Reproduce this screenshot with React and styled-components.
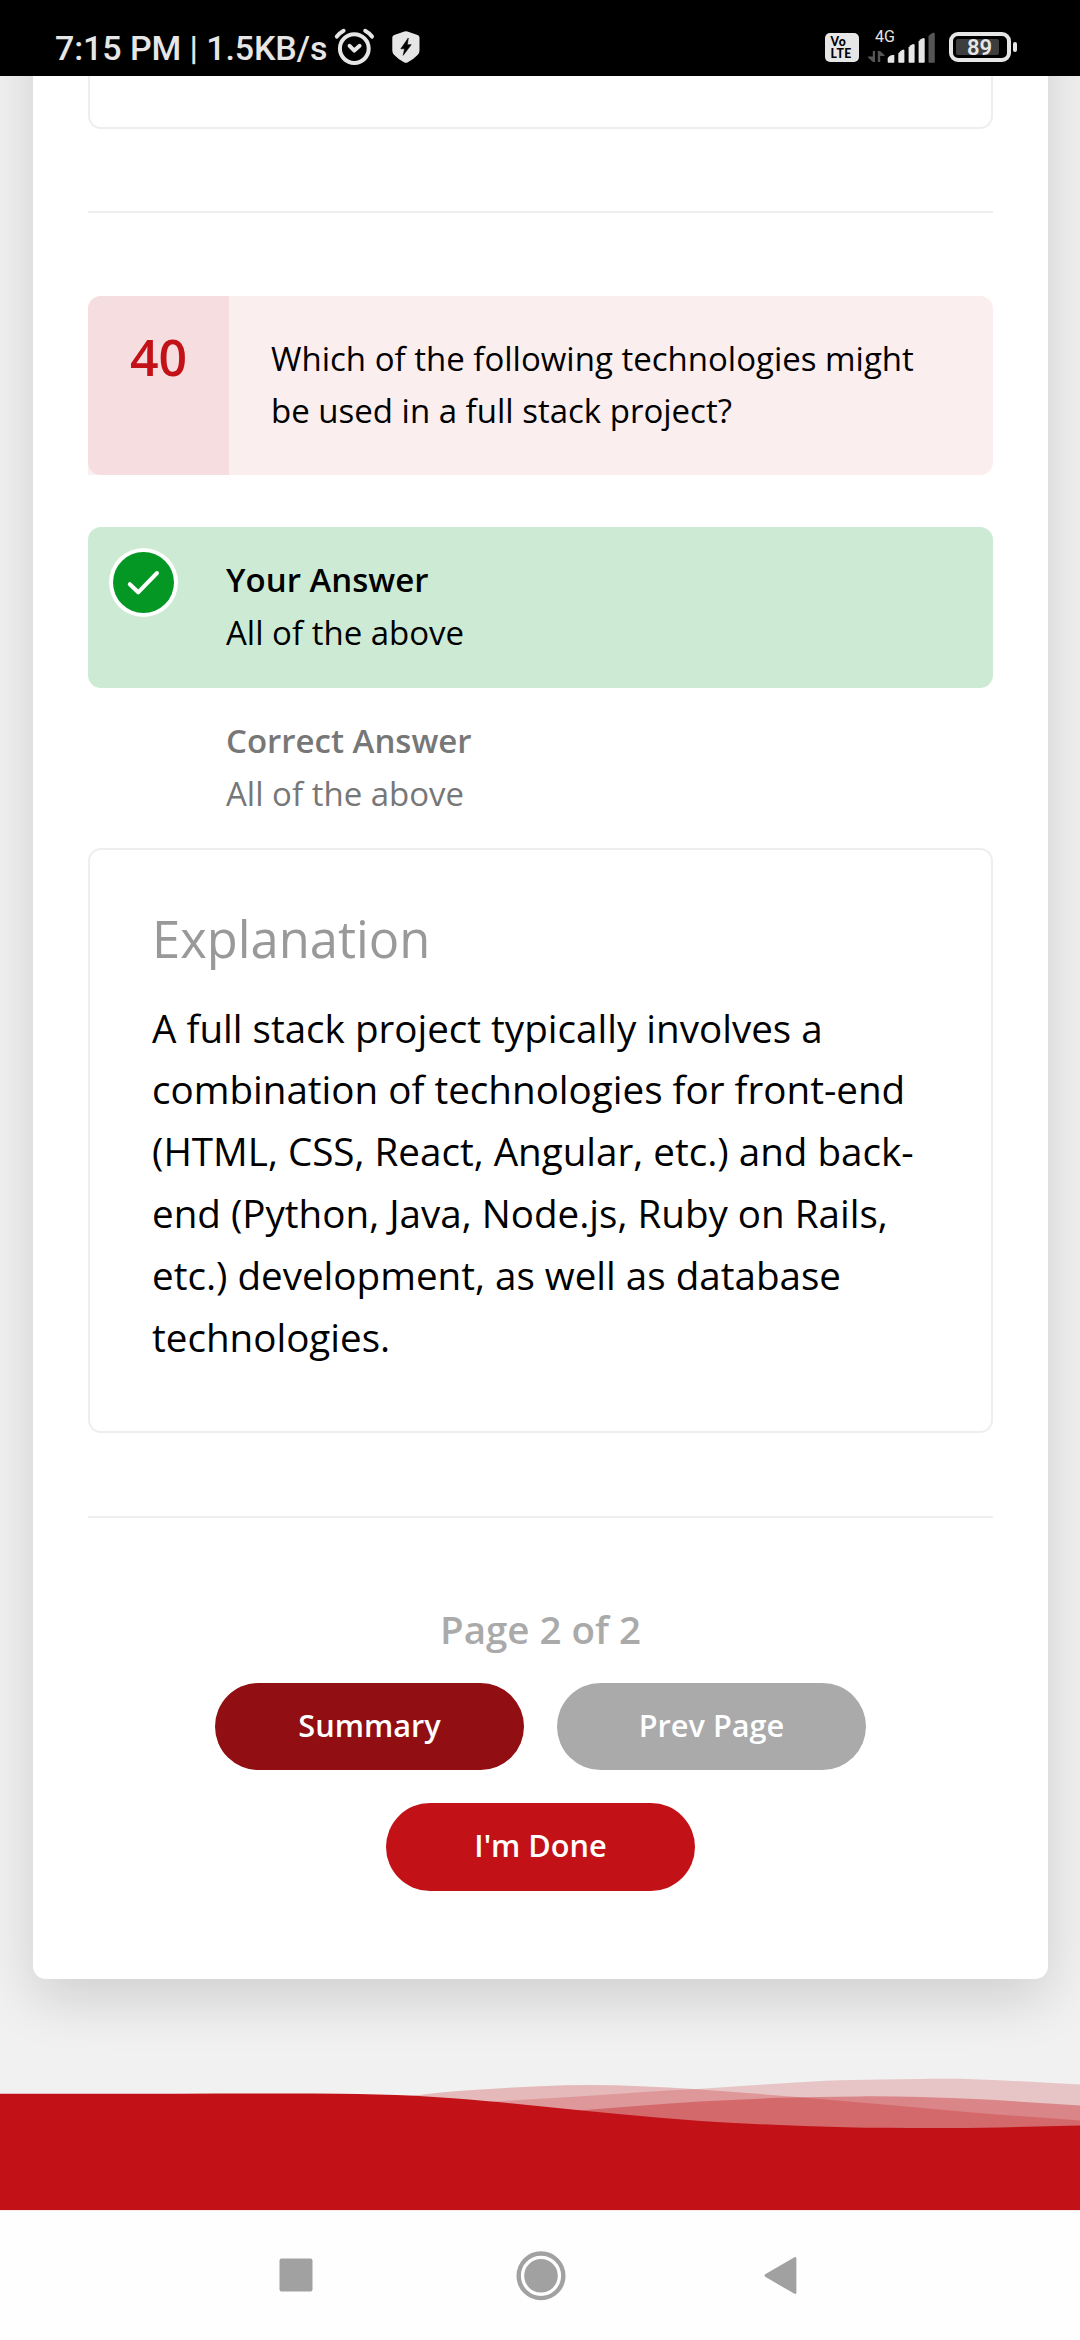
import React from 'react';
import styled, { createGlobalStyle } from 'styled-components';

const GlobalStyle = createGlobalStyle`
  *, *::before, *::after { box-sizing: border-box; }
  html, body { margin: 0; padding: 0; background: #fff; }
  h2, p { margin: 0; font-weight: 400; }
`;

const Screen = styled.div`
  width: 1080px;
  height: 2340px;
  display: flex;
  flex-direction: column;
  overflow: hidden;
  font-family: 'Open Sans', 'Noto Sans', sans-serif;
  color: #000;
`;

/* ---------- status bar ---------- */

const StatusBar = styled.header`
  flex: none;
  height: 76px;
  padding: 26px 69px 0 55px;
  background: #000;
  color: #e6e6e6;
  display: flex;
  justify-content: space-between;
  align-items: flex-start;
  font-family: Roboto, sans-serif;
`;

const StatusGroup = styled.div`
  display: flex;
  align-items: flex-start;
`;

const Clock = styled.span`
  width: 278px;
  font-size: 34px;
  line-height: 44px;
  font-weight: 500;
  letter-spacing: -0.1px;
  white-space: pre;
`;

const StatusIcon = styled.svg`
  display: block;
  flex: none;
  margin-left: ${(p) => p.$gap || 0}px;
`;

const VolteBadge = styled.div`
  width: 34px;
  height: 29.5px;
  margin-top: 6.5px;
  padding: 3px 0 0 5.5px;
  border-radius: 5px;
  background: #e6e6e6;
  color: #000;
  font: 900 12.2px/12.2px Lato, sans-serif;
  letter-spacing: 0.6px;
`;

const Signal = styled.div`
  position: relative;
  width: 68px;
  height: 40px;
  margin-left: 8px;
`;

const NetworkLabel = styled.span`
  position: absolute;
  left: 8px;
  top: 2px;
  font-size: 16px;
  line-height: 18px;
`;

const Battery = styled.div`
  position: relative;
  width: 62px;
  height: 30px;
  margin: 6px 0 0 14px;
  padding: 3px;
  border: 4px solid #e6e6e6;
  border-radius: 9px;
  display: flex;
`;

const BatteryFill = styled.div`
  width: 43px;
  height: 16px;
  border-radius: 2px;
  background: #3d3d3d;
`;

const BatteryTip = styled.span`
  position: absolute;
  left: 60px;
  top: 6px;
  width: 4px;
  height: 10px;
  border-radius: 2px;
  background: #e6e6e6;
`;

const BatteryLevel = styled.span`
  position: absolute;
  left: 14px;
  top: 0;
  font-size: 22px;
  line-height: 24px;
  font-weight: 600;
`;

/* ---------- page ---------- */

const Page = styled.main`
  flex: none;
  height: 2134px;
  overflow: hidden;
  background: #f1f1f1;
  display: flex;
  flex-direction: column;
`;

const Card = styled.section`
  flex: none;
  margin: -120px 32px 0 33px;
  padding: 20px 55px 88.2px;
  border-radius: 13px;
  background: #fff;
  box-shadow: 0 20px 55px rgba(0, 0, 0, 0.14);
`;

const Outlined = styled.div`
  border: 2px solid #eee;
  border-radius: 13px;
`;

const PreviousExplanation = styled(Outlined)`
  height: 153px;
`;

const Divider = styled.div`
  height: 2px;
  margin: ${(p) => p.$top}px 0 ${(p) => p.$bottom}px;
  background: #eee;
`;

const Question = styled.div`
  display: flex;
  height: 179px;
  margin-bottom: 52px;
  border-radius: 13px 13px 13px 0;
  background: #faeeee;
`;

const QuestionNumber = styled.div`
  flex: none;
  width: 141px;
  padding-top: 36px;
  border-radius: 13px 0 0 13px;
  background: #f6dee0;
  color: #c31217;
  font-size: 50px;
  line-height: 50px;
  font-weight: 600;
  text-align: center;
`;

const QuestionText = styled.p`
  padding: 36.5px 60px 0 42px;
  font-size: 33px;
  line-height: 52.4px;
`;

const Answer = styled.div`
  display: flex;
  height: ${(p) => (p.$chosen ? 161 : 160)}px;
  border-radius: 13px;
  background: ${(p) => (p.$chosen ? '#cdebd4' : 'transparent')};
  color: ${(p) => (p.$chosen ? '#000' : '#777')};
  font-size: 33px;
  line-height: 52.8px;
`;

const AnswerMark = styled.div`
  flex: none;
  width: 138px;
  padding: 20.5px 0 0 21px;
`;

const AnswerBody = styled.div`
  padding-top: 26.8px;
`;

const AnswerLabel = styled.p`
  font-weight: 600;
`;

const Explanation = styled(Outlined)`
  height: 585px;
  padding: 59px 60px 0 62px;
`;

const ExplanationTitle = styled.h2`
  margin-bottom: 28.6px;
  color: #999;
  font-size: 50.7px;
  line-height: 60px;
`;

const ExplanationText = styled.p`
  font-size: 38.58px;
  line-height: 61.85px;
`;

const PageCount = styled.p`
  margin-bottom: 24px;
  color: #aaa;
  font-size: 38.5px;
  line-height: 60px;
  font-weight: 600;
  text-align: center;
`;

const Actions = styled.div`
  display: flex;
  flex-wrap: wrap;
  justify-content: center;
  gap: 33px;
`;

const Button = styled.button`
  width: 309px;
  height: 87.4px;
  padding: 0 0 3.7px;
  border: 0;
  border-radius: 44px;
  background: ${(p) => p.$color};
  color: #fff;
  font: 600 30.7px/42px 'Open Sans', sans-serif;
`;

const Waves = styled.svg`
  display: block;
  flex: none;
  margin-top: 91px;
`;

const Footer = styled.footer`
  flex: 1;
  background: #c31217;
`;

const NavBar = styled.nav`
  flex: 1;
  padding: 40px 283px 0 279px;
  border-top: 1px solid #fbe9ea;
  background: #fefefe;
  display: flex;
  justify-content: space-between;
  align-items: flex-start;
`;

const NavIcon = styled.svg`
  display: block;
  margin-left: ${(p) => p.$shift || 0}px;
  fill: #a1a1a1;
`;

/* ---------- drawings ---------- */

// Smooth curve through the given points (Catmull-Rom converted to cubic Béziers).
function smooth(points) {
  let d = `M${points[0][0]} ${points[0][1]}`;
  for (let i = 0; i < points.length - 1; i += 1) {
    const a = points[i - 1] || points[i];
    const b = points[i];
    const c = points[i + 1];
    const e = points[i + 2] || c;
    const k = (c[0] - b[0]) / 3;
    const m1 = (c[1] - a[1]) / (c[0] - a[0]);
    const m2 = (e[1] - b[1]) / (e[0] - b[0]);
    d += ` C${b[0] + k} ${b[1] + k * m1} ${c[0] - k} ${c[1] - k * m2} ${c[0]} ${c[1]}`;
  }
  return d;
}

const WAVES = [
  {
    opacity: 0.25,
    points: [[380, 30], [415, 25.4], [461, 20.8], [540, 16.2], [590, 15.1], [640, 16.2], [697, 19.2], [800, 27.3], [892, 35.2], [964, 41.8], [1080, 50.6]],
  },
  {
    opacity: 0.2,
    points: [[400, 36], [501, 31], [562, 27.6], [640, 22.2], [697, 19], [780, 13.5], [840, 10.3], [920, 8.9], [980, 9.4], [1080, 14.6]],
  },
  {
    opacity: 0.35,
    points: [[500, 45], [582, 40.3], [640, 35.8], [700, 31.6], [780, 27.8], [860, 26.4], [920, 27], [980, 29.3], [1080, 35.6]],
  },
  {
    opacity: 1,
    points: [[0, 23.7], [180, 23.7], [340, 23.7], [415, 25.8], [491, 31.5], [582, 40.5], [660, 47.8], [735, 53], [846, 57.3], [930, 58], [1000, 57.4], [1080, 55.4]],
  },
];

const FooterWaves = () => (
  <Waves width="1080" height="70" viewBox="0 0 1080 70" fill="#c31217">
    {WAVES.map((wave) => (
      <path
        key={wave.opacity}
        opacity={wave.opacity}
        d={`${smooth(wave.points)} V70 H${wave.points[0][0]} Z`}
      />
    ))}
  </Waves>
);

const AlarmIcon = () => (
  <StatusIcon width="42" height="42" viewBox="332 26 42 42" fill="none" stroke="#e6e6e6" strokeWidth="4" strokeLinecap="round">
    <circle cx="353.3" cy="48.6" r="14.4" />
    <path d="M348.6 45.8 353.3 50.6 358.6 45.8" strokeLinejoin="round" />
    <path d="M335.8 36.6Q338.6 33 342.6 30.8M371 36.6Q368.2 33 364.2 30.8" />
  </StatusIcon>
);

const ShieldIcon = () => (
  <StatusIcon $gap={16} width="30" height="42" viewBox="390 26 30 42">
    <path
      fill="#e6e6e6"
      d="M403.4 31.6Q404.9 30.7 406.4 31.6L416.6 35.1Q418.5 35.8 418.5 37.6V50.5Q418.5 53 416.8 54.8Q412 60 406.4 62.4Q404.9 63.1 403.4 62.4Q397.8 60 393 54.8Q391.3 53 391.3 50.5V37.6Q391.3 35.8 393.2 35.1Z"
    />
    <path fill="#000" stroke="#000" strokeWidth="0.6" strokeLinejoin="round" d="M407.3 38 399.8 48.8H403.6L402.2 55.3 410.2 44.7H406.3Z" />
  </StatusIcon>
);

const SignalIcon = () => (
  <svg width="68" height="40" viewBox="867 26 68 40">
    <path fill="#555" d="M872.8 51H875V62H873L868 57.6V56.6H872.8ZM877.8 62V51H880L884.5 54.9V56H880.2V62Z" />
    <g fill="#e6e6e6">
      <path d="M894.3 55V62Q894.3 62.7 893.6 62.7H888.4Q887.7 62.7 887.7 62V58.5Q889 55.2 893 55Z" />
      <path d="M904.4 50V62Q904.4 62.7 903.7 62.7H899Q898.3 62.7 898.3 62V53.5Q900.5 50.3 903 49.4Z" />
      <path d="M914.6 44.6V62Q914.6 62.7 913.9 62.7H909.3Q908.6 62.7 908.6 62V47.6Q910.6 44.9 913 44Z" />
      <path d="M924.7 38.6V62Q924.7 62.7 924 62.7H919.3Q918.6 62.7 918.6 62V41.4Q920.6 38.8 923.2 37.9Z" />
    </g>
    <path fill="#555" d="M934.8 33.4V62Q934.8 62.7 934.1 62.7H929.2Q928.5 62.7 928.5 62V36Q930.6 33.4 933.4 32.4Z" />
  </svg>
);

const CheckBadge = () => (
  <svg width="70" height="70" viewBox="0 0 70 70">
    <circle cx="34.5" cy="34.5" r="34.5" fill="#fff" />
    <circle cx="34.5" cy="34.5" r="30.5" fill="#049724" />
    <path d="M20.8 36.2 29.2 44.3 48 25" fill="none" stroke="#fff" strokeWidth="4" strokeLinecap="round" strokeLinejoin="round" />
  </svg>
);

const ANSWERS = [
  { label: 'Your Answer', text: 'All of the above', chosen: true },
  { label: 'Correct Answer', text: 'All of the above', chosen: false },
];

export default function App() {
  return (
    <Screen>
      <GlobalStyle />
      <StatusBar>
        <StatusGroup>
          <Clock>7:15 PM | 1.5KB/s</Clock>
          <AlarmIcon />
          <ShieldIcon />
        </StatusGroup>
        <StatusGroup>
          <VolteBadge>
            Vo LTE
          </VolteBadge>
          <Signal>
            <SignalIcon />
            <NetworkLabel>4G</NetworkLabel>
          </Signal>
          <Battery>
            <BatteryFill />
            <BatteryLevel>89</BatteryLevel>
            <BatteryTip />
          </Battery>
        </StatusGroup>
      </StatusBar>

      <Page>
        <Card>
          <PreviousExplanation />
          <Divider $top={82} $bottom={83} />

          <Question>
            <QuestionNumber>40</QuestionNumber>
            <QuestionText>Which of the following technologies might be used in a full stack project?</QuestionText>
          </Question>

          {ANSWERS.map((answer) => (
            <Answer key={answer.label} $chosen={answer.chosen}>
              <AnswerMark>{answer.chosen && <CheckBadge />}</AnswerMark>
              <AnswerBody>
                <AnswerLabel>{answer.label}</AnswerLabel>
                <p>{answer.text}</p>
              </AnswerBody>
            </Answer>
          ))}

          <Explanation>
            <ExplanationTitle>Explanation</ExplanationTitle>
            <ExplanationText>
              A full stack project typically involves a combination of technologies for front-end (HTML, CSS, React,
              Angular, etc.) and back-end (Python, Java, Node.js, Ruby on Rails, etc.) development, as well as database
              technologies.
            </ExplanationText>
          </Explanation>
          <Divider $top={83} $bottom={81} />

          <PageCount>Page 2 of 2</PageCount>
          <Actions>
            <Button $color="#910e12">Summary</Button>
            <Button $color="#aaa">Prev Page</Button>
            <Button $color="#c31217">I'm Done</Button>
          </Actions>
        </Card>
        <FooterWaves />
        <Footer />
      </Page>

      <NavBar>
        <NavIcon width="34" height="50" viewBox="279 2251 34 50">
          <rect x="279.5" y="2258.5" width="33" height="33" rx="2" />
        </NavIcon>
        <NavIcon $shift={4} width="50" height="50" viewBox="515.5 2250.5 50 50">
          <circle cx="540.5" cy="2275.3" r="22.3" fill="none" stroke="#a1a1a1" strokeWidth="4.4" />
          <circle cx="540.5" cy="2275.3" r="16.8" />
        </NavIcon>
        <NavIcon width="33" height="50" viewBox="764 2251 33 50">
          <path d="M765.2 2274.3 794 2257.4Q796.4 2256.2 796.4 2258.6V2292.2Q796.4 2294.8 794 2293.6L765.2 2276.7Q763.8 2275.5 765.2 2274.3Z" />
        </NavIcon>
      </NavBar>
    </Screen>
  );
}
